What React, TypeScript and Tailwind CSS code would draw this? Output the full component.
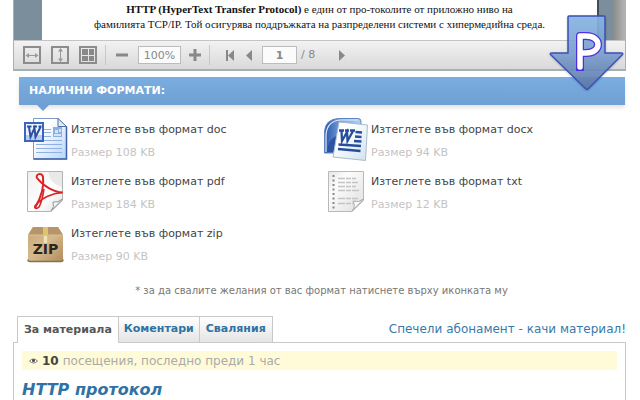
import React from "react";

function FitWidthIcon() {
  return (
    <svg width="18" height="18" viewBox="0 0 18 18" fill="none" aria-hidden="true">
      <rect x="1" y="1" width="16" height="16" stroke="#8c8c8c" strokeWidth="2" />
      <path d="M4 9.5h10" stroke="#999" />
      <path d="M2.5 9.5 6 7v5zM15.5 9.5 12 7v5z" fill="#999" />
    </svg>
  );
}

function FitHeightIcon() {
  return (
    <svg width="18" height="18" viewBox="0 0 18 18" fill="none" aria-hidden="true">
      <rect x="1" y="1" width="16" height="16" stroke="#8c8c8c" strokeWidth="2" />
      <path d="M9.5 4v10" stroke="#999" />
      <path d="M9.5 2 7 5.5h5zM9.5 16 7 12.5h5z" fill="#999" />
    </svg>
  );
}

function ThumbsIcon() {
  return (
    <svg width="18" height="18" viewBox="0 0 18 18" fill="none" aria-hidden="true">
      <rect x="1" y="1" width="16" height="16" stroke="#8c8c8c" strokeWidth="2" />
      <path d="M3 3h6v6H3zM10 3h5v6h-5zM3 10h6v5H3zM10 10h5v5h-5z" fill="#888" />
    </svg>
  );
}

function DocIcon() {
  return (
    <svg width="44" height="44" viewBox="0 0 44 44" role="img" aria-label="doc">
      <defs>
        <linearGradient id="docPage" x1="0" y1="0" x2="1" y2="1">
          <stop offset="0.3" stopColor="#fff" />
          <stop offset="1" stopColor="#b5d3fb" />
        </linearGradient>
      </defs>
      <path d="M9.5 0.5h24.5l8.5 8v32.5h-33z" fill="url(#docPage)" stroke="#7f9cc6" />
      <path d="M42.5 8.5v32.5h-33" fill="none" stroke="#3d62a8" strokeWidth="1.5" />
      <path d="M34 0.5v8h8.5z" fill="#dfeafb" stroke="#54719f" />
      <path d="M20 11.5h7M20 14.5h7M20 18.5h7M12 22.5h26M12 26.5h26M12 30.5h26M12 34.5h26" stroke="#8fb0e0" />
      <path d="M29 9h9v10h-9z" fill="#8db1df" />
      <path d="M31 12h3v3h-3zM35 11h2v3h-2zM30 16h7v2h-7z" fill="#d4e4f8" />
      <rect x="1" y="5" width="18" height="18" fill="#eef4ff" stroke="#3a65be" strokeWidth="2" />
      <path d="M2 17h16v5H2z" fill="#b9cdf0" />
      <path d="M3 8.5h4.500M5 9l1.500 10 4-9 1 9 5-10M9 8.500h4M14.500 8.500h3" fill="none" stroke="#2c4fa3" strokeWidth="2" />
    </svg>
  );
}

function DocxIcon() {
  return (
    <svg width="44" height="44" viewBox="0 0 44 44" role="img" aria-label="docx">
      <defs>
        <linearGradient id="docxBack" x1="0" y1="0" x2="1" y2="0">
          <stop offset="0" stopColor="#2c56a8" />
          <stop offset="0.5" stopColor="#7ba7e2" />
          <stop offset="1" stopColor="#b4cef1" />
        </linearGradient>
        <linearGradient id="docxPage" x1="0" y1="0" x2="1" y2="1">
          <stop offset="0.3" stopColor="#fff" />
          <stop offset="1" stopColor="#cfe2ee" />
        </linearGradient>
      </defs>
      <path d="M.5 35V14Q1 1 15 .5h19q3 0 3 3V35z" fill="url(#docxBack)" stroke="#5c83c4" />
      <path d="M2 34V17Q3 2.500 17 2h17" fill="none" stroke="#e6effb" strokeWidth="1.200" />
      <path d="M3 34q1-14 12-17v17z" fill="#2c52a2" />
      <path d="m15 4 28.500 3-2 35.500L9 39z" fill="url(#docxPage)" stroke="#a9bccb" />
      <path d="M15 12.500h5M17.500 13l.5 10 5-9 .5 9 5.500-10M21 12.500h4M26 12.500h5" fill="none" stroke="#284d9d" strokeWidth="2.300" />
      <path d="m31.500 14 6.500.5M31 18.500l6.500.5M30 23l7.500.5M14.500 26.500l22.500 1.500M14 31l22.500 2" stroke="#284d9d" strokeWidth="2.500" />
    </svg>
  );
}

function PdfIcon() {
  return (
    <svg width="44" height="44" viewBox="0 0 44 44" role="img" aria-label="pdf">
      <defs>
        <linearGradient id="pdfPage" x1="0" y1="0" x2="1" y2="1">
          <stop offset="0" stopColor="#f0f0f0" />
          <stop offset="0.6" stopColor="#fff" />
          <stop offset="1" stopColor="#ddd" />
        </linearGradient>
      </defs>
      <path d="M3.500 1.500h35v29L27 41.500H3.500z" fill="url(#pdfPage)" stroke="#b4b4b4" />
      <path d="M24 2q2 12 14 15V2z" fill="#e9e9e9" />
      <path d="M27 41q4-4 2-9 5 1 9.500-3z" fill="#f6f6f6" stroke="#999" />
      <path d="M38.500 22.500C30 22 19 16 13 8c-2-4 5-6 6-1 1 7 0 17-8 31" fill="none" stroke="#dc2325" strokeWidth="2" />
      <path d="M38.500 22.500C28 23 17 28 11 36c-1 3 2 3 4 1 3-5 4-12 5-18" fill="none" stroke="#dc2325" strokeWidth="1.600" />
    </svg>
  );
}

function TxtIcon() {
  return (
    <svg width="44" height="44" viewBox="0 0 44 44" role="img" aria-label="txt">
      <defs>
        <linearGradient id="txtPage" x1="0" y1="0" x2="1" y2="1">
          <stop offset="0" stopColor="#e6e6e6" />
          <stop offset="0.3" stopColor="#fcfcfc" />
          <stop offset="1" stopColor="#dedede" />
        </linearGradient>
      </defs>
      <path d="M4.500 1.500h35v29L28 41.500H4.500z" fill="url(#txtPage)" stroke="#b9b9b9" />
      <path d="M9.500 5v35" stroke="#888" strokeWidth="2" strokeDasharray="2 2.500" />
      <path d="M14 8.500h18M14 12.500h20M14 16.500h18M14 20.500h21M14 28.500h20M14 33.500h15" stroke="#c4c4c4" strokeWidth="1.500" strokeDasharray="7 1 5 1" />
      <path d="M28 41q4-4 1-10 6 2 10.500-2z" fill="#fafafa" stroke="#aaa" />
    </svg>
  );
}

function ZipIcon() {
  return (
    <svg width="44" height="44" viewBox="0 0 44 44" role="img" aria-label="zip">
      <defs>
        <linearGradient id="zipBox" x1="0" y1="0" x2="1" y2="1">
          <stop offset="0" stopColor="#c9a87b" />
          <stop offset="0.5" stopColor="#d6b98c" />
          <stop offset="1" stopColor="#b28d5e" />
        </linearGradient>
      </defs>
      <path d="M9 5h25l5 8v24q0 2-2 2H6q-2 0-2-2V13z" fill="url(#zipBox)" />
      <path d="M9 5h25l5 8H4z" fill="#b7956a" />
      <path d="M4 13h35" stroke="#dbc198" />
      <path d="M19 5h5v16h-5z" fill="#dfc36e" />
      <path d="M20 14h3v7h-3z" fill="#f0e2b8" />
      <path d="M4 37.500q0 2 2 2h31q2 0 2-2" fill="none" stroke="#85704f" strokeWidth="1.500" />
      <text x="21.500" y="32" textAnchor="middle" fontFamily="DejaVu Sans, sans-serif" fontWeight="700" fontSize="14" fill="#2b2620">ZIP</text>
    </svg>
  );
}

function DownloadBadge() {
  return (
    <svg width="80" height="80" viewBox="0 0 80 80" role="img" aria-label="P">
      <defs>
        <linearGradient id="badgeFill" x1="0" y1="0" x2="0" y2="1">
          <stop offset="0" stopColor="#86b6e5" stopOpacity="0.9" />
          <stop offset="0.5" stopColor="#7da0d0" stopOpacity="0.9" />
          <stop offset="1" stopColor="#5b76a5" stopOpacity="0.9" />
        </linearGradient>
        <filter id="badgeShadow" x="-10%" y="-10%" width="120%" height="120%">
          <feDropShadow dx="0" dy="1" stdDeviation="1" floodColor="#000" floodOpacity="0.2" />
        </filter>
      </defs>
      <path d="M22 3h35q1 0 1 1v36h16q3 0 1 2L41 76q-1 1-2 0L4 42q-2-2 1-2h16V4q0-1 1-1z" fill="url(#badgeFill)" stroke="#3b50b5" strokeWidth="1.500" filter="url(#badgeShadow)" />
      <path d="M33 54V23h6c16 0 16 17 0 17h-6" fill="none" stroke="#4c2fe0" strokeWidth="8" strokeLinecap="square" strokeLinejoin="round" />
      <path d="M33 54V23h6c16 0 16 17 0 17h-6" fill="none" stroke="#fff" strokeWidth="5.500" strokeLinecap="round" strokeLinejoin="round" />
    </svg>
  );
}

const files = [
  { ext: "doc", size: "108 KB", Icon: DocIcon },
  { ext: "docx", size: "94 KB", Icon: DocxIcon },
  { ext: "pdf", size: "184 KB", Icon: PdfIcon },
  { ext: "txt", size: "12 KB", Icon: TxtIcon },
  { ext: "zip", size: "90 KB", Icon: ZipIcon },
];

function Divider() {
  return <span className="h-5 w-px bg-[#c8c8c8]" />;
}

function Viewer() {
  return (
    <section className="border-x border-b-2 border-[#a9afb8]">
      <div className="flex h-10 bg-[#7b8e9c]">
        <div className="w-7 shrink-0" />
        <div className="flex-1 bg-white pt-[2px] text-center font-['Liberation_Serif',serif] text-[11px] leading-[15px] whitespace-nowrap text-[#111]">
          <p>
            <b>HTTP (HyperText Transfer Protocol)</b> е един от про-токолите от приложно ниво на
          </p>
          <p>фамилията TCP/IP. Той осигурява поддръжката на разпределени системи с хипермедийна среда.</p>
        </div>
        <div className="w-4 shrink-0 border-l-2 border-[#3f4d55]" />
        <div className="w-3 shrink-0 bg-linear-to-r from-[#8a8a8a] to-[#b4b4b4]" />
      </div>
      <div className="flex h-[29px] items-center border-t border-[#c4c4c4] bg-linear-to-b from-[#f2f2f2] to-[#d9d9d9] pl-[9px] text-[11px] text-[#888]">
        <div className="flex gap-[10px]">
          <button type="button" aria-label="Fit width"><FitWidthIcon /></button>
          <button type="button" aria-label="Fit height"><FitHeightIcon /></button>
          <button type="button" aria-label="Thumbnails"><ThumbsIcon /></button>
        </div>
        <div className="flex items-center gap-[10px] pl-2">
          <Divider />
          <button type="button" aria-label="Zoom out">
            <svg width="12" height="12" viewBox="0 0 12 12"><path d="M0 4.500h12v3H0z" fill="#888" /></svg>
          </button>
          <input aria-label="Zoom" defaultValue="100%" className="h-[18px] w-[43px] border border-[#bcbcbc] bg-[#fbfbfb] text-center" />
        </div>
        <div className="flex items-center gap-2 pl-2">
          <button type="button" aria-label="Zoom in">
            <svg width="12" height="12" viewBox="0 0 12 12"><path d="M4.500 0h3v4.500H12v3H7.500V12h-3V7.500H0v-3h4.500z" fill="#888" /></svg>
          </button>
          <Divider />
        </div>
        <div className="flex items-center gap-3 pl-4">
          <button type="button" aria-label="First page">
            <svg width="8" height="11" viewBox="0 0 8 11"><path d="M0 0h2v11H0zM8 0v11L2 5.500z" fill="#888" /></svg>
          </button>
          <button type="button" aria-label="Previous page">
            <svg width="6" height="11" viewBox="0 0 6 11"><path d="M6 0v11L0 5.500z" fill="#888" /></svg>
          </button>
        </div>
        <input aria-label="Page" defaultValue="1" className="ml-[10px] h-[18px] w-[35px] border border-[#bcbcbc] bg-[#fbfbfb] text-center font-bold" />
        <span className="pl-1">/ 8</span>
        <button type="button" aria-label="Next page" className="pl-6">
          <svg width="6" height="11" viewBox="0 0 6 11"><path d="M0 0v11l6-5.500z" fill="#888" /></svg>
        </button>
      </div>
    </section>
  );
}

export default function App() {
  return (
    <main className="relative flex min-h-screen flex-col bg-white pr-[14px] pl-[13px] font-['DejaVu_Sans',Verdana,sans-serif] text-xs text-[#444]">
      <Viewer />
      <h2 className="relative mt-[6px] mr-px ml-[6px] h-7 bg-linear-to-b from-[#7aade1] to-[#70a0d3] pl-[10px] text-[11px] leading-7 font-bold text-white shadow-[0_3px_4px_#e4e4e4]">
        НАЛИЧНИ ФОРМАТИ:
        <svg className="absolute top-full left-[18px]" width="12" height="6" viewBox="0 0 12 6" aria-hidden="true">
          <path d="M0 0h12L6 6z" fill="#70a0d3" />
        </svg>
      </h2>
      <ul className="mt-[13px] mr-[2px] ml-[11px] grid grid-cols-2 text-[11px]">
        {files.map(({ ext, size, Icon }) => (
          <li key={ext} className="h-[52px]">
            <a href={"#" + ext} className="flex gap-[3px]">
              <Icon />
              <span>
                <span className="block leading-6">Изтеглете във формат {ext}</span>
                <span className="block leading-[22px] text-[#c4c4c4]">Размер {size}</span>
              </span>
            </a>
          </li>
        ))}
      </ul>
      <p className="mt-[9px] pl-1 text-center text-[10px] leading-4 text-[#777]">
        * за да свалите желания от вас формат натиснете върху иконката му
      </p>
      <div className="relative z-10 mt-4 -mb-px flex items-end justify-between pl-1">
        <div role="tablist" className="flex text-[11px] font-bold">
          <button role="tab" aria-selected="true" type="button" className="h-[27px] border border-b-0 border-[#c9c9c9] bg-white px-[6px] text-[#555]">
            За материала
          </button>
          <button role="tab" aria-selected="false" type="button" className="h-[27px] border border-l-0 border-[#c9c9c9] bg-linear-to-b from-white to-[#e4e4e4] px-[5px] text-[#2f72a3]">
            Коментари
          </button>
          <button role="tab" aria-selected="false" type="button" className="h-[27px] border border-l-0 border-[#c9c9c9] bg-linear-to-b from-white to-[#e4e4e4] px-[6px] text-[#2f72a3]">
            Сваляния
          </button>
        </div>
        <a href="#upload" className="leading-7 text-[#3a78a8]">Спечели абонамент - качи материал!</a>
      </div>
      <section className="flex-1 border border-b-0 border-[#c9c9c9] px-2 pt-2">
        <p className="flex h-[19px] items-center bg-[#fffbd8] pl-[7px] text-[#aaa]">
          <svg width="9" height="6" viewBox="0 0 9 6" className="mr-1" aria-hidden="true">
            <path d="M.5 3Q4.500-1 8.500 3 4.500 7 .5 3z" fill="#fff" stroke="#777" />
            <circle cx="4.500" cy="2.500" r="1.500" fill="#444" />
          </svg>
          <b className="mr-1 text-[#444]">10</b>
          посещения, последно преди 1 час
        </p>
        <h1 className="mt-[9px] text-base leading-[22px] font-bold text-[#2f72a3] italic">HTTP протокол</h1>
      </section>
      <div className="pointer-events-none absolute top-[13px] right-[13px]">
        <DownloadBadge />
      </div>
    </main>
  );
}
